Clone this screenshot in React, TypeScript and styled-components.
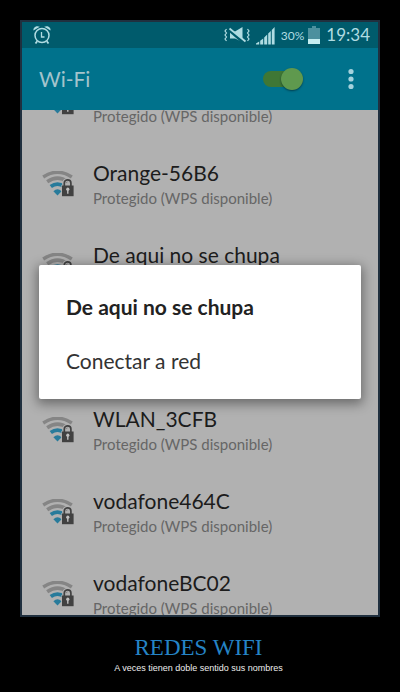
import React from "react";
import styled, { createGlobalStyle } from "styled-components";

const GlobalStyle = createGlobalStyle`
  * { box-sizing: border-box; }
  html, body { margin: 0; background: #000; }
  body { font-family: Lato, "Open Sans", sans-serif; }
`;

const Poster = styled.main`
  min-height: 100vh;
  padding: 20px 20px 16px;
  background: #000;
`;

const Screen = styled.section`
  position: relative;
  overflow: hidden;
  border: 2px solid #20303f;
  background: #b1b1b1;
`;

const StatusBar = styled.div`
  display: flex;
  align-items: center;
  justify-content: space-between;
  height: 26px;
  padding: 0 8px 0 11px;
  background: #005b6c;
  color: #b0dce2;
`;

const StatusGroup = styled.div`
  display: flex;
  align-items: center;
  gap: 6px;
`;

const Battery = styled.div`
  display: flex;
  align-items: center;
  gap: 4px;
  font-size: 12px;
`;

const Clock = styled.time`
  font-size: 17px;
  line-height: 24px;
`;

const AppBar = styled.header`
  display: flex;
  align-items: center;
  height: 62px;
  padding: 0 17px;
  background: #00728c;
`;

const AppTitle = styled.h1`
  flex: 1;
  margin: 0;
  font-size: 21px;
  font-weight: 400;
  line-height: 28px;
  color: #a4c4cc;
`;

const Switch = styled.input`
  appearance: none;
  display: flex;
  align-items: center;
  justify-content: flex-end;
  width: 40px;
  height: 16px;
  margin: 0 38px 0 0;
  border-radius: 8px;
  background: #3f7735;
  cursor: pointer;

  &::before {
    content: "";
    width: 22px;
    height: 22px;
    flex: none;
    border-radius: 50%;
    background: #5f994e;
    box-shadow: 0 1px 2px rgba(0, 30, 40, 0.6);
  }

  &:not(:checked) {
    justify-content: flex-start;
  }
`;

const MenuButton = styled.button`
  display: flex;
  justify-content: center;
  width: 20px;
  padding: 0;
  border: 0;
  background: none;
  color: #a4d2dd;
  cursor: pointer;
`;

const ListArea = styled.div`
  overflow: hidden;
`;

const NetworkList = styled.ul`
  margin: -49px 0 -20px;
  padding: 0;
  list-style: none;
`;

const NetworkRow = styled.li`
  display: flex;
  align-items: center;
  gap: 19px;
  height: 82px;
  padding: 0 20px;
`;

const NetworkText = styled.div`
  display: grid;
  gap: 3px;
`;

const NetworkName = styled.div`
  height: 24px;
  font-size: 21px;
  line-height: 24px;
  white-space: nowrap;
  color: #1c1c1c;
`;

const NetworkDetail = styled.div`
  height: 20px;
  font-size: 15px;
  line-height: 20px;
  white-space: nowrap;
  color: #666;
`;

const Overlay = styled.div`
  position: absolute;
  inset: 26px 0 0;
  display: flex;
  align-items: center;
  padding: 0 17px;
`;

const Dialog = styled.div`
  flex: 1;
  display: grid;
  justify-items: start;
  gap: 28px;
  padding: 29px 27px 25px;
  border-radius: 2px;
  background: #fff;
  box-shadow: 0 3px 12px 2px rgba(0, 0, 0, 0.4);
`;

const DialogTitle = styled.h2`
  margin: 0;
  font-size: 21px;
  font-weight: 700;
  line-height: 26px;
  color: #222;
`;

const DialogAction = styled.button`
  padding: 0;
  border: 0;
  background: none;
  font-family: inherit;
  font-size: 21px;
  line-height: 26px;
  color: #333;
  cursor: pointer;
`;

const Caption = styled.footer`
  padding: 17px 3px 0 0;
  text-align: center;
`;

const CaptionTitle = styled.h2`
  margin: 0;
  font-family: "Liberation Serif", serif;
  font-size: 23px;
  font-weight: 400;
  line-height: 28px;
  color: #2584c6;
`;

const CaptionText = styled.p`
  margin: 0;
  font-family: "Liberation Sans", sans-serif;
  font-size: 9px;
  line-height: 12px;
  color: #eee;
`;

const AlarmIcon = () => (
  <svg width="18" height="20" viewBox="0 0 18 20" fill="none" stroke="currentColor" aria-hidden="true">
    <circle cx="9" cy="10.5" r="7" strokeWidth="1.5" />
    <path d="M8.5 7V12H11.5" strokeWidth="1.3" />
    <path d="M4.2 16.2L2.5 18.5M13.8 16.2L15.5 18.5" strokeWidth="1.8" />
    <path d="M.5 5.4C0 2.2 3.8 0 6.8 1.8ZM17.5 5.4C18 2.2 14.2 0 11.2 1.8Z" fill="currentColor" stroke="none" />
  </svg>
);

const VibrateIcon = () => (
  <svg width="26" height="18" viewBox="0 0 26 18" fill="none" stroke="currentColor" aria-hidden="true">
    <path d="M2.5 3L1 5L2.5 7L1 9L2.5 11L1 13L2.5 15M23.5 3L25 5L23.5 7L25 9L23.5 11L25 13L23.5 15" strokeWidth="1.2" />
    <path d="M6 5.5H11L18.5 1V16L11 12.5H6Z" fill="currentColor" stroke="none" />
    <path d="M4.5 3.2L20 16.8" stroke="#005b6c" strokeWidth="3.2" />
    <path d="M5.5 2.5L21.5 15.5" strokeWidth="1.8" />
  </svg>
);

const SignalIcon = () => (
  <svg width="19" height="19" viewBox="0 0 19 19" fill="currentColor" aria-hidden="true">
    <path d="M0 18.5V17.5L3.2 15.6V18.5ZM4.2 18.5V14.8L7.2 12.4V18.5ZM8.2 18.5V11.4L11.2 8.6V18.5ZM12.2 18.5V7.6L14.8 5.1V18.5ZM15.8 18.5V4L18.6 1V18.5Z" />
  </svg>
);

const BatteryIcon = () => (
  <svg width="12" height="18" viewBox="0 0 12 18" aria-hidden="true">
    <path d="M4 0H8V2H12V18H0V2H4Z" fill="#4c909e" />
    <path d="M0 13H12V18H0Z" fill="#c4edf0" />
  </svg>
);

const MoreIcon = () => (
  <svg width="6" height="22" viewBox="0 0 6 22" fill="currentColor" aria-hidden="true">
    <circle cx="3" cy="3.5" r="2.6" />
    <circle cx="3" cy="11" r="2.6" />
    <circle cx="3" cy="18.5" r="2.6" />
  </svg>
);

const SecureWifiIcon = () => (
  <svg width="32" height="26" viewBox="0 0 32 26" fill="none" aria-hidden="true">
    <path d="M1.2 6Q15.5 -3.6 29.8 6" stroke="#858585" strokeWidth="3.4" />
    <path d="M5.2 10.8Q15.5 3.4 25.8 10.8" stroke="#858585" strokeWidth="3.6" />
    <path d="M8.8 15.6Q15.5 10.6 22.2 15.6" stroke="#287b9b" strokeWidth="3.8" />
    <path d="M11.4 20.2Q15.5 16.4 19.6 20.2L15.5 24.6Z" fill="#287b9b" />
    <path d="M19.4 14H32V26H19.4Z" fill="#b1b1b1" />
    <path d="M22 16V12.2C22 7.6 29.2 7.6 29.2 12.2V16" stroke="#b1b1b1" strokeWidth="3.6" />
    <path d="M22.3 16V12C22.3 7.8 28.9 7.8 28.9 12V16" stroke="#414141" strokeWidth="1.7" />
    <path d="M20 14.5H31.6V25.2H20Z" fill="#414141" />
    <circle cx="25.8" cy="18.2" r="1.6" fill="#c0c0c0" />
    <path d="M25.8 18V22.8" stroke="#c0c0c0" strokeWidth="1.4" />
  </svg>
);

const PROTECTED = "Protegido (WPS disponible)";

const networks = [
  { id: 1, name: "", detail: PROTECTED },
  { id: 2, name: "Orange-56B6", detail: PROTECTED },
  { id: 3, name: "De aqui no se chupa", detail: "" },
  { id: 4, name: "", detail: "" },
  { id: 5, name: "WLAN_3CFB", detail: PROTECTED },
  { id: 6, name: "vodafone464C", detail: PROTECTED },
  { id: 7, name: "vodafoneBC02", detail: PROTECTED },
];

export default function App() {
  return (
    <>
      <GlobalStyle />
      <Poster>
        <Screen>
          <StatusBar>
            <AlarmIcon />
            <StatusGroup>
              <VibrateIcon />
              <SignalIcon />
              <Battery>
                <span>30%</span>
                <BatteryIcon />
              </Battery>
              <Clock>19:34</Clock>
            </StatusGroup>
          </StatusBar>
          <AppBar>
            <AppTitle>Wi-Fi</AppTitle>
            <Switch type="checkbox" role="switch" aria-label="Wi-Fi" defaultChecked />
            <MenuButton type="button" aria-label="Más opciones">
              <MoreIcon />
            </MenuButton>
          </AppBar>
          <ListArea>
            <NetworkList>
              {networks.map((network) => (
                <NetworkRow key={network.id}>
                  <SecureWifiIcon />
                  <NetworkText>
                    <NetworkName>{network.name}</NetworkName>
                    <NetworkDetail>{network.detail}</NetworkDetail>
                  </NetworkText>
                </NetworkRow>
              ))}
            </NetworkList>
          </ListArea>
          <Overlay>
            <Dialog role="dialog" aria-labelledby="network-title">
              <DialogTitle id="network-title">De aqui no se chupa</DialogTitle>
              <DialogAction type="button">Conectar a red</DialogAction>
            </Dialog>
          </Overlay>
        </Screen>
        <Caption>
          <CaptionTitle>REDES WIFI</CaptionTitle>
          <CaptionText>A veces tienen doble sentido sus nombres</CaptionText>
        </Caption>
      </Poster>
    </>
  );
}
